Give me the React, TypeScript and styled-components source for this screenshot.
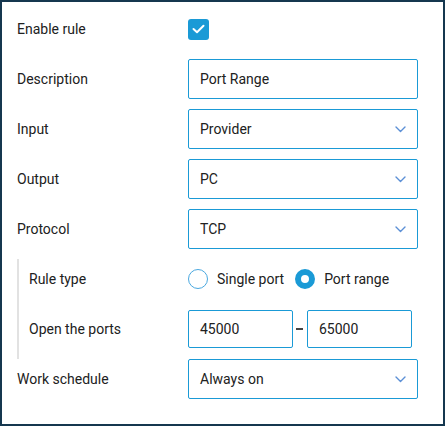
import styled, { createGlobalStyle } from "styled-components";

const GlobalStyle = createGlobalStyle`
  html, body {
    margin: 0;
    padding: 0;
    background: #ffffff;
  }
  body {
    font-family: Roboto, "Liberation Sans", sans-serif;
    font-size: 14px;
    color: #212121;
  }
`;

const Frame = styled.div`
  width: 445px;
  height: 426px;
  box-sizing: border-box;
  border: 2px solid #15374f;
  padding: 7px 0 0 15px;
`;

const Form = styled.div`
  width: 401px;
  display: flex;
  flex-direction: column;
`;

const Row = styled.div`
  display: flex;
  align-items: center;
  height: 40px;
  margin-bottom: 10px;
`;

const Label = styled.div`
  flex: 1;
  line-height: 20px;
`;

const Field = styled.div`
  width: 230px;
  display: flex;
  align-items: center;
`;

const Group = styled.div`
  border-left: 2px solid #e2e2e2;
  padding-left: 10px;
`;

const Checkbox = styled.div`
  width: 21px;
  height: 21px;
  border-radius: 3px;
  background: #1a9ad6;
  display: flex;
  align-items: center;
  justify-content: center;
`;

const TextBox = styled.div<{ $height?: number }>`
  box-sizing: border-box;
  width: 100%;
  height: ${(p) => p.$height ?? 40}px;
  border: 1px solid #1a9ad6;
  border-radius: 2px;
  padding: 0 11px;
  display: flex;
  align-items: center;
  justify-content: space-between;
`;

const PortBox = styled(TextBox)`
  width: 105px;
`;

const Dash = styled.span`
  width: 7px;
  height: 2px;
  background: #444444;
  margin: 0 4px 0 3px;
`;

const RadioGroup = styled.div`
  display: flex;
  align-items: center;
`;

const RadioOption = styled.label`
  display: flex;
  align-items: center;
  gap: 9px;
  margin-right: 11px;
`;

const RadioDot = styled.span<{ $checked?: boolean }>`
  box-sizing: border-box;
  width: 20px;
  height: 20px;
  border-radius: 50%;
  border: ${(p) => (p.$checked ? "6px solid #1a9ad6" : "1px solid #4aa8df")};
  background: #ffffff;
`;

const Chevron = () => (
  <svg width="11" height="7" viewBox="0 0 11 7" fill="none">
    <polyline
      points="1,1 5.5,5.5 10,1"
      stroke="#5b8fd6"
      strokeWidth="1.4"
      strokeLinecap="round"
      strokeLinejoin="round"
    />
  </svg>
);

function Select({ value }: { value: string }) {
  return (
    <TextBox>
      <span>{value}</span>
      <Chevron />
    </TextBox>
  );
}

export default function App() {
  return (
    <>
      <GlobalStyle />
      <Frame>
        <Form>
          <Row>
            <Label>Enable rule</Label>
            <Field>
              <Checkbox>
                <svg width="13" height="10" viewBox="0 0 13 10" fill="none">
                  <polyline
                    points="1.5,5 5,8.2 11.5,1.8"
                    stroke="#ffffff"
                    strokeWidth="2"
                    strokeLinecap="round"
                    strokeLinejoin="round"
                  />
                </svg>
              </Checkbox>
            </Field>
          </Row>
          <Row>
            <Label>Description</Label>
            <Field>
              <TextBox>Port Range</TextBox>
            </Field>
          </Row>
          <Row>
            <Label>Input</Label>
            <Field>
              <Select value="Provider" />
            </Field>
          </Row>
          <Row>
            <Label>Output</Label>
            <Field>
              <Select value="PC" />
            </Field>
          </Row>
          <Row>
            <Label>Protocol</Label>
            <Field>
              <Select value="TCP" />
            </Field>
          </Row>
          <Group>
            <Row>
              <Label>Rule type</Label>
              <Field>
                <RadioGroup>
                  <RadioOption>
                    <RadioDot />
                    Single port
                  </RadioOption>
                  <RadioOption>
                    <RadioDot $checked />
                    Port range
                  </RadioOption>
                </RadioGroup>
              </Field>
            </Row>
            <Row>
              <Label>Open the ports</Label>
              <Field>
                <PortBox $height={38}>45000</PortBox>
                <Dash />
                <PortBox $height={38}>65000</PortBox>
              </Field>
            </Row>
          </Group>
          <Row>
            <Label>Work schedule</Label>
            <Field>
              <Select value="Always on" />
            </Field>
          </Row>
        </Form>
      </Frame>
    </>
  );
}
